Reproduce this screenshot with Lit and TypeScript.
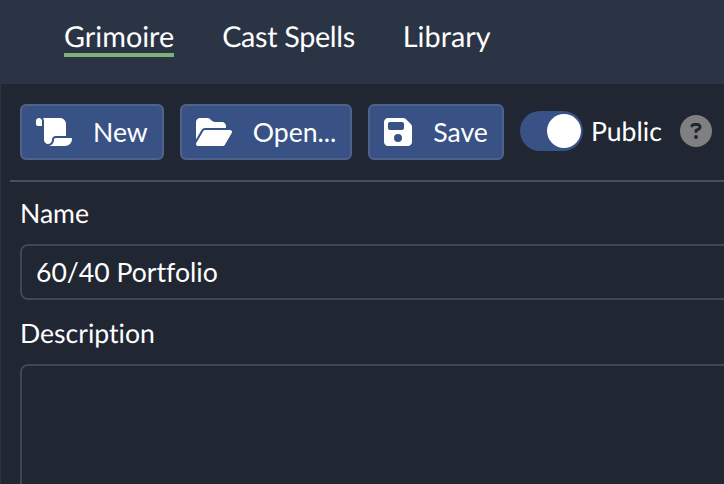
import { html, css, LitElement } from 'lit'
import { customElement, state } from 'lit/decorators.js'

const scroll = html`<svg class="icon" viewBox="0 0 576 512"><path d="M0 80v48c0 17.7 14.3 32 32 32H48 96V80c0-26.5-21.5-48-48-48S0 53.5 0 80zM112 32c10 13.4 16 30 16 48V384c0 35.3 28.7 64 64 64s64-28.7 64-64v-5.3c0-32.4 26.3-58.7 58.7-58.7H480V128c0-53-43-96-96-96H112zM464 480c61.9 0 112-50.1 112-112c0-8.8-7.2-16-16-16H314.7c-14.7 0-26.7 11.9-26.7 26.7V384c0 53-43 96-96 96H368h96z"/></svg>`
const folder = html`<svg class="icon" viewBox="0 0 576 512"><path d="M88.7 223.8L0 375.8V96C0 60.7 28.7 32 64 32H181.5c17 0 33.3 6.7 45.3 18.7l26.5 26.5c12 12 28.3 18.7 45.3 18.7H416c35.3 0 64 28.7 64 64v32H144c-22.8 0-43.8 12.1-55.3 31.8zm27.6 16.1C122.1 230 132.6 224 144 224H544c11.5 0 22 6.2 27.7 16.1s5.7 22.2-.1 32.1l-112 192C453.9 474 443.4 480 432 480H32c-11.5 0-22-6.2-27.7-16.1s-5.7-22.2 .1-32.1l112-192z"/></svg>`
const floppy = html`<svg class="icon" viewBox="0 0 448 512"><path d="M64 32C28.7 32 0 60.7 0 96V416c0 35.3 28.7 64 64 64H384c35.3 0 64-28.7 64-64V173.3c0-17-6.7-33.3-18.7-45.3L352 50.7C340 38.7 323.7 32 306.7 32H64zm0 96c0-17.7 14.3-32 32-32H288c17.7 0 32 14.3 32 32v64c0 17.7-14.3 32-32 32H96c-17.7 0-32-14.3-32-32V128zM224 288a64 64 0 1 1 0 128 64 64 0 1 1 0-128z"/></svg>`
const question = html`<svg class="help" viewBox="0 0 512 512"><path d="M256 512A256 256 0 1 0 256 0a256 256 0 1 0 0 512zM169.8 165.3c7.9-22.3 29.1-37.3 52.8-37.3h58.3c34.9 0 63.1 28.3 63.1 63.1c0 22.6-12.1 43.5-31.7 54.8L280 264.4c-.2 13-10.9 23.6-24 23.6c-13.3 0-24-10.7-24-24V250.5c0-8.6 4.6-16.5 12.1-20.8l44.3-25.4c4.7-2.7 7.6-7.7 7.6-13.1c0-8.4-6.8-15.1-15.1-15.1H222.6c-3.4 0-6.4 2.1-7.5 5.3l-.4 1.2c-4.4 12.5-18.2 19-30.6 14.6s-19-18.2-14.6-30.6l.4-1.2zM224 352a32 32 0 1 1 64 0 32 32 0 1 1 -64 0z"/></svg>`

@customElement('app-root')
export class AppRoot extends LitElement {
  static styles = css`
    :host {
      display: block;
      height: 484px;
      overflow: hidden;
      background: #212633;
      box-shadow: inset 1px 0 0 #2d3341;
      color: #fff;
      font-family: Lato, sans-serif;
      font-size: 26.6px;
      font-variant-ligatures: none;
      text-rendering: geometricPrecision;
    }

    .nav {
      display: flex;
      gap: 48px;
      height: 84px;
      box-sizing: border-box;
      padding: 21px 0 0 64px;
      background: #2b3445;
      font-size: 28.8px;
    }

    .tab {
      height: 32px;
      line-height: 32px;
    }

    .tab.active {
      border-bottom: 4px solid #7fb077;
    }

    .tab.tight {
      letter-spacing: -0.35px;
    }

    .main {
      padding: 20px 0 0 10px;
    }

    .toolbar {
      display: flex;
      align-items: flex-start;
      gap: 16px;
      padding-left: 10px;
      height: 76px;
      border-bottom: 2px solid #4a4d5e;
    }

    .btn {
      display: flex;
      align-items: center;
      gap: 21px;
      height: 56px;
      box-sizing: border-box;
      padding: 0 14px;
      border: 2px solid #4e628b;
      border-radius: 6px;
      background: #385285;
      color: #fff;
      font: inherit;
      font-variant-ligatures: none;
    }

    .icon {
      height: 32px;
      fill: #fff;
    }

    .public {
      display: flex;
      align-items: center;
      height: 54px;
    }

    .switch {
      position: relative;
      width: 63px;
      height: 40px;
      margin-right: 8px;
      border-radius: 20px;
      background: #385285;
    }

    .knob {
      position: absolute;
      top: 3px;
      right: 2px;
      width: 34px;
      height: 34px;
      border-radius: 50%;
      background: #fff;
    }

    .help {
      width: 32px;
      height: 32px;
      margin-left: 18px;
      fill: #808080;
    }

    .form {
      padding-left: 10px;
    }

    label {
      display: block;
      line-height: 32px;
    }

    .name-label {
      margin-top: 15px;
      margin-bottom: 15px;
    }

    .desc-label {
      margin-top: 17px;
      margin-bottom: 15px;
    }

    input,
    textarea {
      display: block;
      box-sizing: border-box;
      width: calc(100% + 20px);
      border: 2px solid #414554;
      border-radius: 8px;
      background: transparent;
      color: #fff;
      font: inherit;
      font-variant-ligatures: none;
      outline: none;
      padding: 0 14px;
      resize: none;
    }

    input {
      height: 56px;
    }

    textarea {
      height: 200px;
    }
  `

  @state()
  tabs = ['Grimoire', 'Cast Spells', 'Library']

  render() {
    return html`
      <nav class="nav">
        ${this.tabs.map((t, i) => html`<div class="tab ${i === 0 ? 'active' : i === 1 ? 'tight' : ''}">${t}</div>`)}
      </nav>
      <div class="main">
        <div class="toolbar">
          <button class="btn">${scroll}New</button>
          <button class="btn">${folder}Open...</button>
          <button class="btn">${floppy}Save</button>
          <div class="public">
            <div class="switch"><div class="knob"></div></div>
            Public ${question}
          </div>
        </div>
        <div class="form">
          <label class="name-label">Name</label>
          <input type="text" .value=${'60/40 Portfolio'} />
          <label class="desc-label">Description</label>
          <textarea></textarea>
        </div>
      </div>
    `
  }
}
